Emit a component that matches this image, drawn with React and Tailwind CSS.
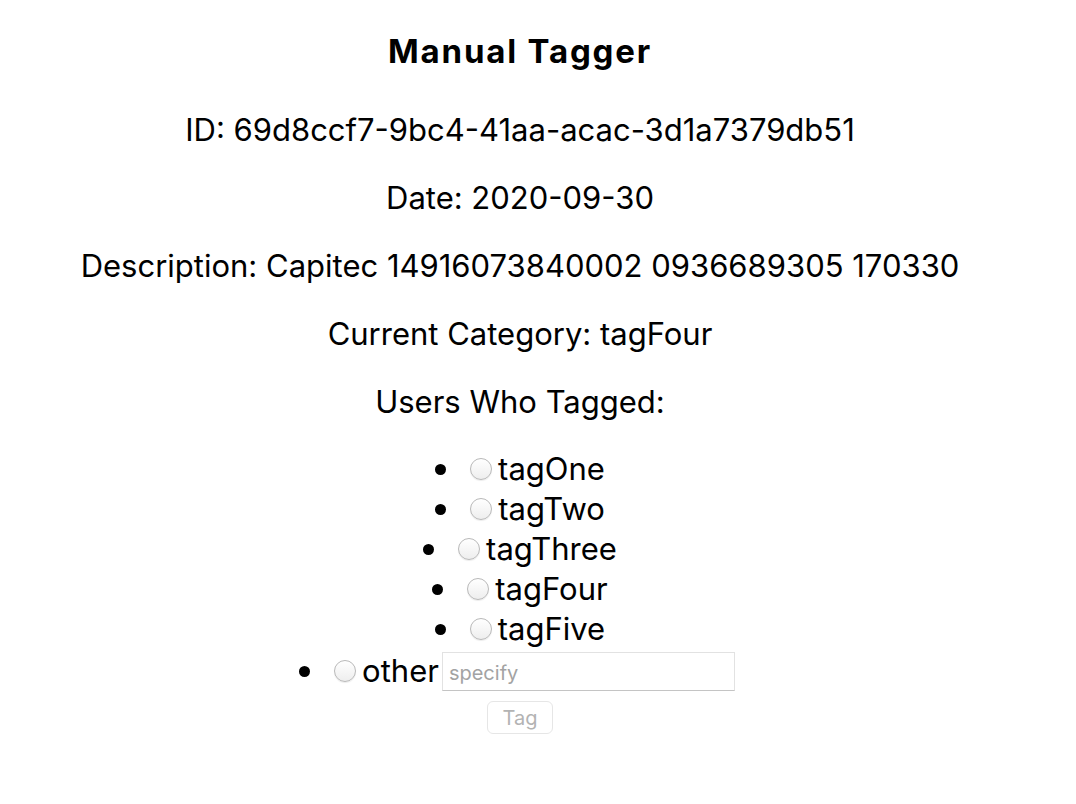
import React from 'react';

const tags = ['tagOne', 'tagTwo', 'tagThree', 'tagFour', 'tagFive'];

const Radio = ({ name, value }) => (
  <input
    type="radio"
    name={name}
    value={value}
    className="appearance-none block w-[22px] h-[22px] min-w-[22px] rounded-full border border-[#b9b9b9] bg-gradient-to-b from-white to-[#eeeeee] shadow-[0_1px_1px_rgba(0,0,0,0.08)] shrink-0"
  />
);

const Bullet = () => <span className="w-[11px] h-[11px] rounded-full bg-black shrink-0" />;

const App = () => {
  return (
    <div className="w-[1040px] flex flex-col items-center text-black text-[31px] font-['Inter','Noto_Sans',sans-serif]">
      <h1 className="mt-[33px] leading-[37px] font-bold text-[33px] tracking-[1.8px]">Manual Tagger</h1>

      <p className="mt-[41px] leading-[37px]">ID: 69d8ccf7-9bc4-41aa-acac-3d1a7379db51</p>
      <p className="mt-[31px] leading-[37px]">Date: 2020-09-30</p>
      <p className="mt-[31px] leading-[37px]">Description: Capitec 14916073840002 0936689305 170330</p>
      <p className="mt-[31px] leading-[37px]">Current Category: tagFour</p>
      <p className="mt-[31px] leading-[37px]">Users Who Tagged:</p>

      {/* Tag options */}
      <ul className="mt-[29px] flex flex-col items-center">
        {tags.map((tag) => (
          <li key={tag} className="h-[40px] flex items-center">
            <Bullet />
            <label className="ml-[24px] flex items-center gap-[6px]">
              <Radio name="tag" value={tag} />
              <span className="leading-[40px]">{tag}</span>
            </label>
          </li>
        ))}
        <li className="h-[44px] flex items-center -ml-[6px]">
          <Bullet />
          <label className="ml-[24px] flex items-center gap-[6px]">
            <Radio name="tag" value="other" />
            <span className="leading-[40px]">other</span>
          </label>
          <input
            type="text"
            placeholder="specify"
            className="ml-[3px] w-[293px] h-[39px] px-[6px] pt-[3px] border border-[#e2e2e2] border-b-[#c4c4c4] text-[20px] placeholder:text-[#a3a3a3] outline-none"
          />
        </li>
      </ul>

      <button
        disabled
        className="mt-[8px] w-[66px] h-[33px] rounded-[6px] border border-[#e6e6e6] bg-white text-[20px] text-[#b3b3b3]"
      >
        Tag
      </button>
    </div>
  );
};

export default App;
